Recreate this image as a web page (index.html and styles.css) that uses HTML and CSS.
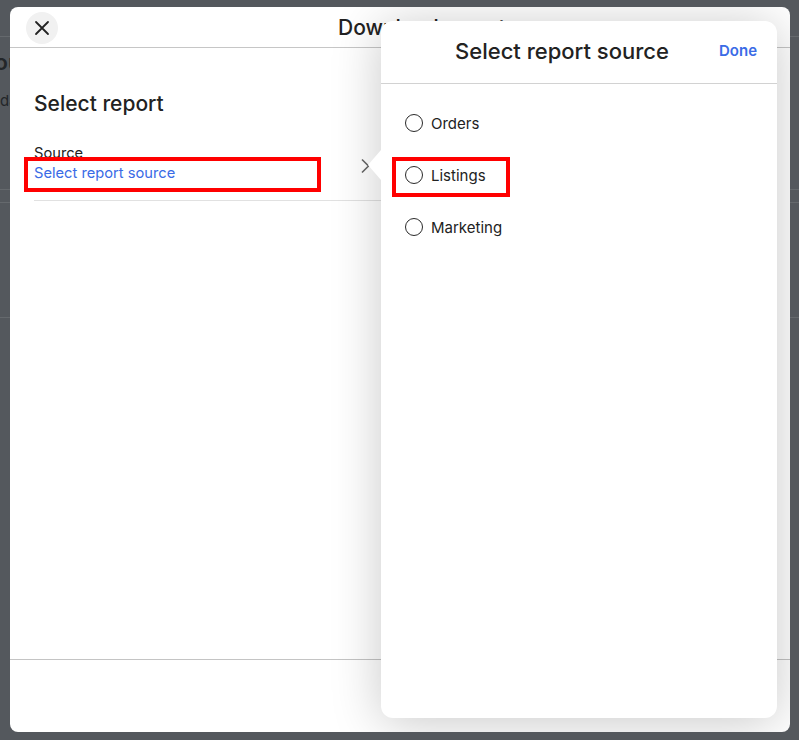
FILE: index.html
```html
<!DOCTYPE html>
<html lang="en">
<head>
    <meta charset="UTF-8">
    <meta name="viewport" content="width=device-width, initial-scale=1.0">
    <title>Download report</title>
    <link rel="stylesheet" href="styles.css">
</head>
<body>

    <!-- page behind the dialog -->
    <div class="page">
        <div class="page-bar"></div>
        <div class="page-intro">
            <h1>Your data</h1>
            <p>data from your shop</p>
        </div>
        <div class="page-row"></div>
        <div class="page-row tall"></div>
    </div>

    <div class="modal">
        <div class="modal-header">
            <button class="close-btn" aria-label="Close">
                <svg width="16" height="16" viewBox="0 0 16 16">
                    <path d="M2 2 L14 14 M14 2 L2 14" stroke="#222" stroke-width="1.8" stroke-linecap="round" fill="none"/>
                </svg>
            </button>
            <h2 class="modal-title">Download report</h2>
        </div>

        <div class="modal-body">
            <h3 class="section-title">Select report</h3>
            <div class="field">
                <div class="field-text">
                    <span class="field-label">Source</span>
                    <a class="field-link" href="#">Select report source</a>
                </div>
                <svg class="chevron" width="10" height="16" viewBox="0 0 10 16">
                    <path d="M2 1.5 L8.5 8 L2 14.5" stroke="#666" stroke-width="1.6" fill="none"/>
                </svg>
            </div>
        </div>

        <div class="modal-footer"></div>

        <div class="panel">
            <div class="panel-header">
                <h2 class="panel-title">Select report source</h2>
                <a class="done" href="#">Done</a>
            </div>
            <div class="radio-list">
                <label class="radio-row"><span class="radio"></span>Orders</label>
                <label class="radio-row"><span class="radio"></span>Listings</label>
                <label class="radio-row"><span class="radio"></span>Marketing</label>
            </div>
        </div>
    </div>

    <!-- highlight marks -->
    <div class="mark mark-link"></div>
    <div class="mark mark-listings"></div>

</body>
</html>
```

FILE: styles.css
```css
* {
    box-sizing: border-box;
}

body {
    margin: 0;
    background-color: #54585d;
    font-family: Inter, "Noto Sans", sans-serif;
    color: #222;
    height: 740px;
    overflow: hidden;
}

/* background page */
.page-bar {
    height: 37px;
    border-bottom: 1px solid #65696d;
}

.page-intro {
    height: 153px;
    padding-top: 12px;
    border-bottom: 1px solid #65696d;
    color: #232629;
}

.page-intro h1 {
    margin: 0 0 0 -19px;
    font-size: 22px;
    font-weight: 600;
}

.page-intro p {
    margin: 16px 0 0;
    font-size: 15px;
}

.page-row {
    height: 13px;
    border-bottom: 1px solid #65696d;
}

.page-row.tall {
    height: 115px;
}

/* dialog */
.modal {
    position: absolute;
    top: 7px;
    left: 10px;
    width: 780px;
    height: 725px;
    background-color: #fff;
    border-radius: 8px;
    overflow: hidden;
    display: flex;
    flex-direction: column;
}

.modal-header {
    height: 41px;
    flex-shrink: 0;
    display: flex;
    align-items: center;
    padding: 0 16px;
    border-bottom: 1px solid #c6c6c6;
}

.close-btn {
    width: 32px;
    height: 32px;
    border: none;
    border-radius: 50%;
    background-color: #f1f1f1;
    display: flex;
    align-items: center;
    justify-content: center;
    padding: 0;
    margin-top: 1px;
}

.modal-title {
    margin: 0 0 0 280px;
    font-size: 21px;
    font-weight: 500;
}

.modal-body {
    flex: 1;
    padding: 42px 24px 0;
}

.section-title {
    margin: 0;
    font-size: 21px;
    line-height: 28px;
    font-weight: 500;
}

.field {
    width: 347px;
    margin-top: 25px;
    padding-bottom: 17px;
    border-bottom: 1px solid #e1e1e1;
    display: flex;
    align-items: center;
    justify-content: space-between;
}

.field-text {
    display: flex;
    flex-direction: column;
    font-size: 14.7px;
    line-height: 20px;
}

.field-link {
    color: #3a6be6;
    text-decoration: none;
}

.chevron {
    margin-right: 11px;
    margin-top: 5px;
}

.modal-footer {
    height: 73px;
    flex-shrink: 0;
    border-top: 1px solid #c4c4c4;
}

/* source panel */
.panel {
    position: absolute;
    top: 14px;
    right: 13px;
    bottom: 14px;
    width: 396px;
    background-color: #fff;
    border-radius: 12px;
    box-shadow: 0 4px 50px rgba(0, 0, 0, 0.22);
}

.panel::before {
    content: "";
    position: absolute;
    left: -13px;
    top: 129px;
    border-right: 13px solid #fff;
    border-top: 15px solid transparent;
    border-bottom: 15px solid transparent;
}

.panel-header {
    height: 63px;
    display: flex;
    align-items: center;
    padding: 0 20px 3px 24px;
    border-bottom: 1px solid #d2d2d2;
}

.panel-title {
    flex: 1;
    margin: 0;
    text-align: center;
    font-size: 22px;
    font-weight: 500;
}

.done {
    color: #3a6be6;
    font-size: 15px;
    font-weight: 600;
    text-decoration: none;
}

.radio-list {
    padding: 13px 24px;
}

.radio-row {
    height: 52px;
    display: flex;
    align-items: center;
    gap: 8px;
    font-size: 15px;
}

.radio {
    width: 18px;
    height: 18px;
    border: 1.5px solid #2a2a2a;
    border-radius: 50%;
}

/* red highlight marks */
.mark {
    position: absolute;
    border: 4px solid #ff0000;
}

.mark-link {
    left: 24px;
    top: 157px;
    width: 297px;
    height: 35px;
}

.mark-listings {
    left: 392px;
    top: 157px;
    width: 118px;
    height: 40px;
}
```
